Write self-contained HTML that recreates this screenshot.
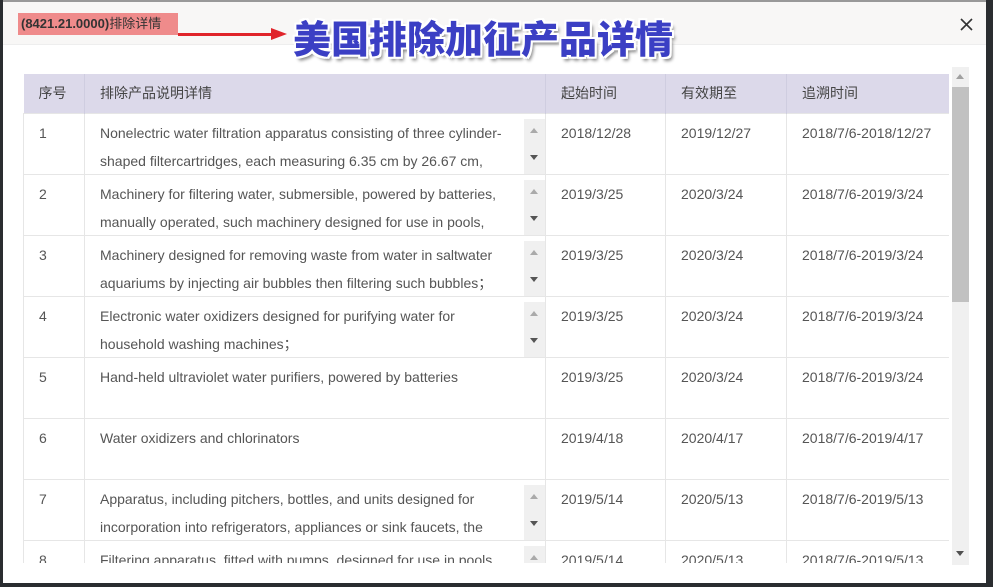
<!DOCTYPE html>
<html><head><meta charset="utf-8"><style>
*{margin:0;padding:0;box-sizing:border-box}
html,body{width:993px;height:587px;overflow:hidden}
body{background:#2a2d30;position:relative;font-family:"Liberation Sans","Noto Sans CJK SC",sans-serif}
.dlg{position:absolute;left:3px;top:0;width:983px;height:583px;background:#fff;border-top:2px solid #999;overflow:hidden}
.hd{position:absolute;left:0;top:0;width:983px;height:43px;background:#f8f7f6;border-bottom:1px solid #eee}
.tag{position:absolute;left:15px;top:11px;height:22px;width:160px;background:#ef8b8b;font-size:13px;color:#333;line-height:22px;padding-left:3px}
.arrow{position:absolute;left:175px;top:31px;width:100px;height:3px;background:#e0242a}
.ah{position:absolute;left:268px;top:26px;width:0;height:0;border-left:16px solid #e0242a;border-top:6px solid transparent;border-bottom:6px solid transparent}
.big{position:absolute;left:290px;top:12px;font-size:38px;font-weight:900;color:#3b3fc4;font-family:"Noto Sans CJK SC",sans-serif;text-shadow:-2px -2px 0 #fff,2px -2px 0 #fff,-2px 2px 0 #fff,2px 2px 0 #fff,0 2px 0 #fff,0 -2px 0 #fff,2px 0 0 #fff,-2px 0 0 #fff,3px 4px 3px #888;line-height:46px}
.x{position:absolute;left:957px;top:16px}
.wrap{position:absolute;left:20px;top:72px;width:926px;height:489px;overflow:hidden}
table{border-collapse:collapse;width:926px;font-size:14px;color:#555;table-layout:fixed}
th{background:#dcd9ea;height:39px;text-align:left;font-weight:normal;color:#444;padding-left:15px;border-right:1px solid #cfcde0}
td{height:61px;vertical-align:top;padding:0;border:1px solid #e6e6e6;position:relative;white-space:nowrap;overflow:hidden}
.c{height:60px;overflow:hidden;padding:5px 0 0 15px;line-height:28px;position:relative}
td.d .c{padding-right:24px}
.sb{position:absolute;right:0;top:5px;width:21px;height:55px;background:#f0f0f0}
.sb:before{content:"";position:absolute;left:6px;top:9px;border-bottom:5px solid #aaa;border-left:4px solid transparent;border-right:4px solid transparent}
.sb:after{content:"";position:absolute;left:6px;top:36px;border-top:5px solid #555;border-left:4px solid transparent;border-right:4px solid transparent}
.vs{position:absolute;left:949px;top:65px;width:17px;height:498px;background:#f0f0f0}
.th{position:absolute;left:949px;top:85px;width:17px;height:215px;background:#c1c1c1}
.u{position:absolute;left:953px;top:72px;border-bottom:5px solid #a0a0a0;border-left:4px solid transparent;border-right:4px solid transparent}
.dn{position:absolute;left:953px;top:549px;border-top:5px solid #505050;border-left:4px solid transparent;border-right:4px solid transparent}
</style></head><body>
<div class="dlg">
<div class="hd"></div>
<div class="tag"><b>(8421.21.0000)</b>排除详情</div>
<div class="arrow"></div><div class="ah"></div>
<div class="big">美国排除加征产品详情</div>
<svg class="x" width="13" height="13" viewBox="0 0 13 13"><path d="M1 1L12 12M12 1L1 12" stroke="#333" stroke-width="1.6"/></svg>
<div class="wrap"><table>
<colgroup><col style="width:61px"><col style="width:461px"><col style="width:120px"><col style="width:121px"><col style="width:163px"></colgroup>
<tr><th>序号</th><th>排除产品说明详情</th><th>起始时间</th><th>有效期至</th><th>追溯时间</th></tr>
<tr><td><div class="c">1</div></td><td class="d"><div class="c">Nonelectric water filtration apparatus consisting of three cylinder-<br>shaped filtercartridges, each measuring 6.35 cm by 26.67 cm,</div><div class="sb"></div></td><td><div class="c">2018/12/28</div></td><td><div class="c">2019/12/27</div></td><td><div class="c">2018/7/6-2018/12/27</div></td></tr>
<tr><td><div class="c">2</div></td><td class="d"><div class="c">Machinery for filtering water, submersible, powered by batteries,<br>manually operated, such machinery designed for use in pools,</div><div class="sb"></div></td><td><div class="c">2019/3/25</div></td><td><div class="c">2020/3/24</div></td><td><div class="c">2018/7/6-2019/3/24</div></td></tr>
<tr><td><div class="c">3</div></td><td class="d"><div class="c">Machinery designed for removing waste from water in saltwater<br>aquariums by injecting air bubbles then filtering such bubbles；</div><div class="sb"></div></td><td><div class="c">2019/3/25</div></td><td><div class="c">2020/3/24</div></td><td><div class="c">2018/7/6-2019/3/24</div></td></tr>
<tr><td><div class="c">4</div></td><td class="d"><div class="c">Electronic water oxidizers designed for purifying water for<br>household washing machines；</div><div class="sb"></div></td><td><div class="c">2019/3/25</div></td><td><div class="c">2020/3/24</div></td><td><div class="c">2018/7/6-2019/3/24</div></td></tr>
<tr><td><div class="c">5</div></td><td class="d"><div class="c">Hand-held ultraviolet water purifiers, powered by batteries</div></td><td><div class="c">2019/3/25</div></td><td><div class="c">2020/3/24</div></td><td><div class="c">2018/7/6-2019/3/24</div></td></tr>
<tr><td><div class="c">6</div></td><td class="d"><div class="c">Water oxidizers and chlorinators</div></td><td><div class="c">2019/4/18</div></td><td><div class="c">2020/4/17</div></td><td><div class="c">2018/7/6-2019/4/17</div></td></tr>
<tr><td><div class="c">7</div></td><td class="d"><div class="c">Apparatus, including pitchers, bottles, and units designed for<br>incorporation into refrigerators, appliances or sink faucets, the</div><div class="sb"></div></td><td><div class="c">2019/5/14</div></td><td><div class="c">2020/5/13</div></td><td><div class="c">2018/7/6-2019/5/13</div></td></tr>
<tr><td><div class="c">8</div></td><td class="d"><div class="c">Filtering apparatus, fitted with pumps, designed for use in pools<br>&nbsp;</div><div class="sb"></div></td><td><div class="c">2019/5/14</div></td><td><div class="c">2020/5/13</div></td><td><div class="c">2018/7/6-2019/5/13</div></td></tr>
</table></div>
<div class="vs"></div><div class="th"></div><div class="u"></div><div class="dn"></div>
</div>
</body></html>
